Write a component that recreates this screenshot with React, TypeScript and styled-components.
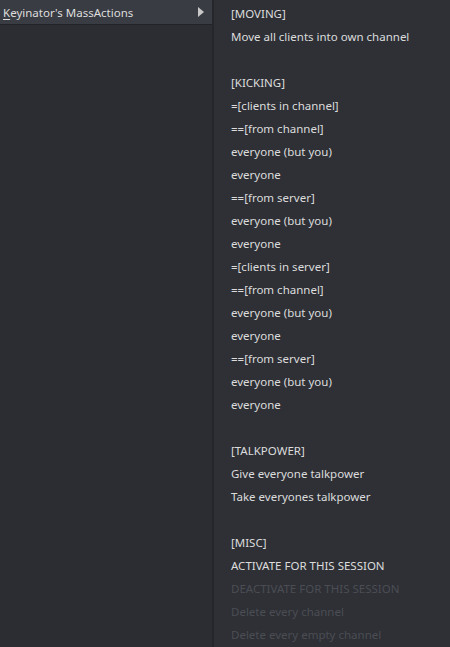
import React from "react";
import styled, { createGlobalStyle } from "styled-components";

const Global = createGlobalStyle`
  html, body { margin: 0; padding: 0; background: #2b2d32; }
  body { font-family: "Noto Sans", "Open Sans", sans-serif; font-size: 11.5px; }
`;

const Screen = styled.div`
  width: 450px;
  height: 647px;
  display: flex;
  background: #2b2d32;
  overflow: hidden;
`;

const LeftMenu = styled.div`
  width: 212px;
  display: flex;
  flex-direction: column;
`;

const ParentItem = styled.div`
  height: 24px;
  display: flex;
  align-items: center;
  justify-content: space-between;
  padding: 0 8px 0 3px;
  background: #3a3c43;
  color: #dedede;
  border-bottom: 1px solid #222327;
`;

const Label = styled.span`
  white-space: nowrap;
  u { text-decoration: underline; text-underline-offset: 2px; }
`;

const Arrow = styled.svg`
  width: 6px;
  height: 10px;
  fill: #c8c8c8;
`;

const SubMenu = styled.div`
  flex: 1;
  border-left: 2px solid #25262a;
  background: #2e3036;
  padding-top: 2px;
  display: flex;
  flex-direction: column;
`;

const Row = styled.div<{ $disabled?: boolean }>`
  height: 23px;
  line-height: 23px;
  padding-left: 17px;
  white-space: nowrap;
  color: ${(p) => (p.$disabled ? "#4b4d53" : "#dcdcdc")};
`;

type Item = { t: string; d?: boolean } | null;

const items: Item[] = [
  { t: "[MOVING]" },
  { t: "Move all clients into own channel" },
  null,
  { t: "[KICKING]" },
  { t: "=[clients in channel]" },
  { t: "==[from channel]" },
  { t: "everyone (but you)" },
  { t: "everyone" },
  { t: "==[from server]" },
  { t: "everyone (but you)" },
  { t: "everyone" },
  { t: "=[clients in server]" },
  { t: "==[from channel]" },
  { t: "everyone (but you)" },
  { t: "everyone" },
  { t: "==[from server]" },
  { t: "everyone (but you)" },
  { t: "everyone" },
  null,
  { t: "[TALKPOWER]" },
  { t: "Give everyone talkpower" },
  { t: "Take everyones talkpower" },
  null,
  { t: "[MISC]" },
  { t: "ACTIVATE FOR THIS SESSION" },
  { t: "DEACTIVATE FOR THIS SESSION", d: true },
  { t: "Delete every channel", d: true },
  { t: "Delete every empty channel", d: true },
];

export default function App() {
  return (
    <>
      <Global />
      <Screen>
        <LeftMenu>
          <ParentItem>
            <Label>
              <u>K</u>eyinator's MassActions
            </Label>
            <Arrow viewBox="0 0 6 10">
              <path d="M0 0 L6 5 L0 10 Z" />
            </Arrow>
          </ParentItem>
        </LeftMenu>
        <SubMenu>
          {items.map((it, i) =>
            it ? (
              <Row key={i} $disabled={it.d}>
                {it.t}
              </Row>
            ) : (
              <Row key={i} />
            )
          )}
        </SubMenu>
      </Screen>
    </>
  );
}
